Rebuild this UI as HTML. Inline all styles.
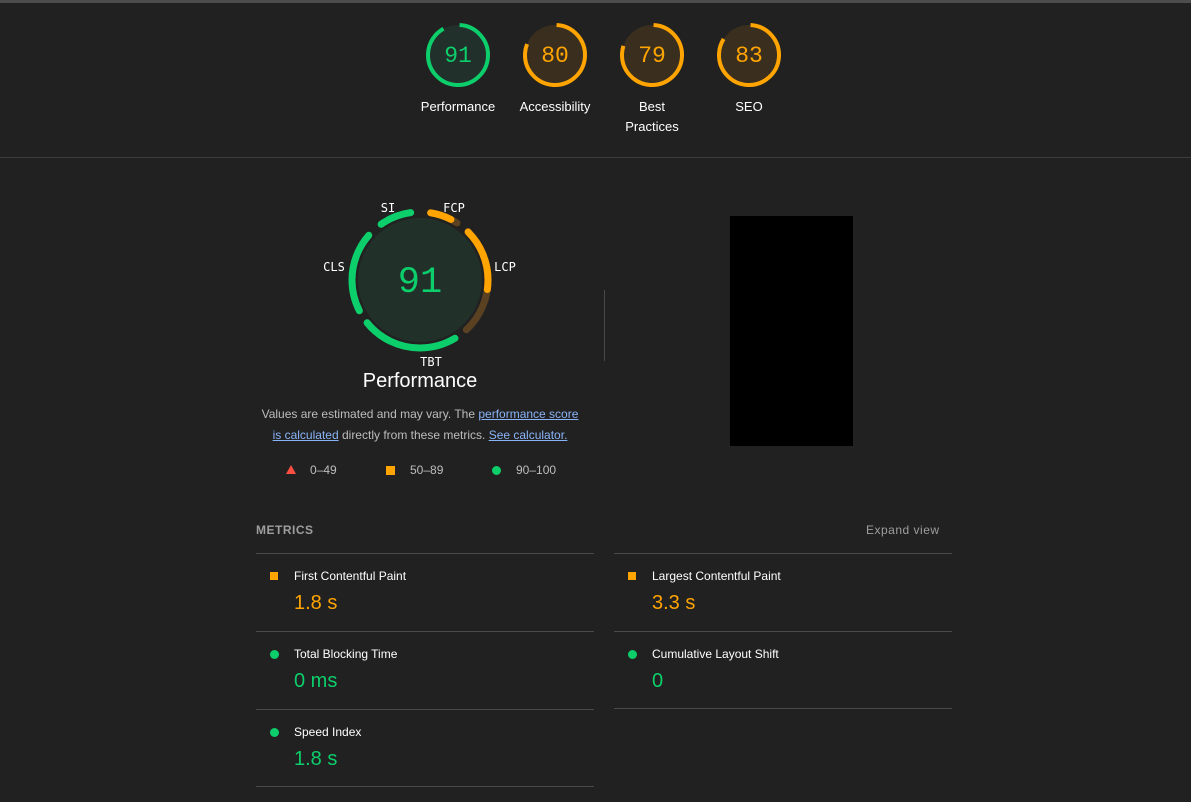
<!DOCTYPE html>
<html><head><meta charset="utf-8"><style>
body{margin:0;width:1191px;height:802px;background:#212121;overflow:hidden;position:relative;font-family:"Liberation Sans",Arial,sans-serif;color:#e8eaed}
.a{position:absolute}
.lbl{position:absolute;font-size:13px;color:#fff;text-align:center;width:100px;line-height:20px}
.line{position:absolute;height:1px;background:#4a4a4a}
.mt{position:absolute;font-size:12px;color:#fff}
.mv{position:absolute;font-size:20px}
.g{color:#0cce6b}.o{color:#ffa400}
a{color:#8ab4f8;text-decoration:underline}
</style></head><body>
<div class="a" style="left:0;top:0;width:1191px;height:3px;background:#4d4d4d"></div>
<div class="line" style="left:0;top:157px;width:1191px;background:#3c3c3c"></div>

<svg class="a" style="left:0;top:0" width="1191" height="160">
<g transform="translate(458,55)"><circle r="30" fill="#21302a"/><circle r="30" fill="none" stroke="#0cce6b" stroke-width="4" stroke-dasharray="171.5 400" transform="rotate(-87)"/><text y="7" text-anchor="middle" font-family="Liberation Mono,monospace" font-size="23" fill="#0cce6b">91</text></g>
<g transform="translate(555,55)"><circle r="30" fill="#3a2f1f"/><circle r="30" fill="none" stroke="#ffa400" stroke-width="4" stroke-dasharray="150.8 400" transform="rotate(-87)"/><text y="7" text-anchor="middle" font-family="Liberation Mono,monospace" font-size="23" fill="#ffa400">80</text></g>
<g transform="translate(652,55)"><circle r="30" fill="#3a2f1f"/><circle r="30" fill="none" stroke="#ffa400" stroke-width="4" stroke-dasharray="148.9 400" transform="rotate(-87)"/><text y="7" text-anchor="middle" font-family="Liberation Mono,monospace" font-size="23" fill="#ffa400">79</text></g>
<g transform="translate(749,55)"><circle r="30" fill="#3a2f1f"/><circle r="30" fill="none" stroke="#ffa400" stroke-width="4" stroke-dasharray="156.5 400" transform="rotate(-87)"/><text y="7" text-anchor="middle" font-family="Liberation Mono,monospace" font-size="23" fill="#ffa400">83</text></g>
</svg>
<div class="lbl" style="left:408px;top:97px">Performance</div>
<div class="lbl" style="left:505px;top:97px">Accessibility</div>
<div class="lbl" style="left:602px;top:97px">Best<br>Practices</div>
<div class="lbl" style="left:699px;top:97px">SEO</div>

<svg class="a" style="left:300px;top:190px" width="250" height="190">
<g transform="translate(120,90)">
<circle r="62" fill="#22302a"/>
<g transform="rotate(-90)" fill="none" stroke-width="7" stroke-linecap="round">
<circle r="68" stroke="#0cce6b" stroke-dasharray="32 1000" stroke-dashoffset="-385.7"/>
<circle r="68" stroke="#5a4122" stroke-dasharray="28.5 1000" stroke-dashoffset="-10.7"/>
<circle r="68" stroke="#ffa400" stroke-dasharray="21.4 1000" stroke-dashoffset="-10.7"/>
<circle r="68" stroke="#5a4122" stroke-dasharray="109.2 1000" stroke-dashoffset="-53.4"/>
<circle r="68" stroke="#ffa400" stroke-dasharray="62.9 1000" stroke-dashoffset="-53.4"/>
<circle r="68" stroke="#0cce6b" stroke-dasharray="97.3 1000" stroke-dashoffset="-176.8"/>
<circle r="68" stroke="#0cce6b" stroke-dasharray="80.7 1000" stroke-dashoffset="-288.4"/>
</g>
<text y="12" text-anchor="middle" font-family="Liberation Mono,monospace" font-size="37" fill="#0cce6b">91</text>
</g>
<g font-family="DejaVu Sans Mono,monospace" font-size="12" fill="#fff" text-anchor="middle">
<text x="88" y="22">SI</text><text x="154" y="22">FCP</text><text x="205" y="81">LCP</text><text x="34" y="81">CLS</text><text x="131" y="176">TBT</text>
</g>
</svg>
<div class="a" style="left:300px;top:370px;width:240px;text-align:center;font-size:20px;color:#fff">Performance</div>
<div class="a" style="left:258px;top:404px;width:324px;text-align:center;font-size:12px;line-height:21px;color:#bdbdbd">Values are estimated and may vary. The <a>performance score is calculated</a> directly from these metrics. <a>See calculator.</a></div>
<svg class="a" style="left:284px;top:463px" width="16" height="14"><polygon points="7,2 12,11 2,11" fill="#ff4e42"/></svg>
<div class="a" style="left:310px;top:463px;font-size:12px;color:#bdbdbd">0–49</div>
<div class="a" style="left:386px;top:466px;width:9px;height:9px;background:#ffa400"></div>
<div class="a" style="left:410px;top:463px;font-size:12px;color:#bdbdbd">50–89</div>
<div class="a" style="left:492px;top:466px;width:9px;height:9px;border-radius:50%;background:#0cce6b"></div>
<div class="a" style="left:516px;top:463px;font-size:12px;color:#bdbdbd">90–100</div>

<div class="a" style="left:604px;top:290px;width:1px;height:71px;background:#4a4a4a"></div>
<div class="a" style="left:730px;top:216px;width:123px;height:230px;background:#000"></div>

<div class="a" style="left:256px;top:523px;font-size:12px;font-weight:bold;letter-spacing:0.5px;color:#9e9e9e">METRICS</div>
<div class="a" style="left:866px;top:523px;font-size:12px;letter-spacing:0.5px;color:#9e9e9e">Expand view</div>
<div class="line" style="left:256px;top:553px;width:338px"></div>
<div class="line" style="left:614px;top:553px;width:338px"></div>
<div class="line" style="left:256px;top:631px;width:338px"></div>
<div class="line" style="left:614px;top:631px;width:338px"></div>
<div class="line" style="left:256px;top:709px;width:338px"></div>
<div class="line" style="left:614px;top:708px;width:338px"></div>
<div class="line" style="left:256px;top:786px;width:338px"></div>

<div class="a" style="left:270px;top:572px;width:8px;height:8px;background:#ffa400"></div>
<div class="mt" style="left:294px;top:569px">First Contentful Paint</div>
<div class="mv o" style="left:294px;top:592px">1.8 s</div>
<div class="a" style="left:628px;top:572px;width:8px;height:8px;background:#ffa400"></div>
<div class="mt" style="left:652px;top:569px">Largest Contentful Paint</div>
<div class="mv o" style="left:652px;top:592px">3.3 s</div>

<div class="a" style="left:270px;top:650px;width:9px;height:9px;border-radius:50%;background:#0cce6b"></div>
<div class="mt" style="left:294px;top:647px">Total Blocking Time</div>
<div class="mv g" style="left:294px;top:670px">0 ms</div>
<div class="a" style="left:628px;top:650px;width:9px;height:9px;border-radius:50%;background:#0cce6b"></div>
<div class="mt" style="left:652px;top:647px">Cumulative Layout Shift</div>
<div class="mv g" style="left:652px;top:670px">0</div>

<div class="a" style="left:270px;top:728px;width:9px;height:9px;border-radius:50%;background:#0cce6b"></div>
<div class="mt" style="left:294px;top:725px">Speed Index</div>
<div class="mv g" style="left:294px;top:748px">1.8 s</div>
</body></html>
